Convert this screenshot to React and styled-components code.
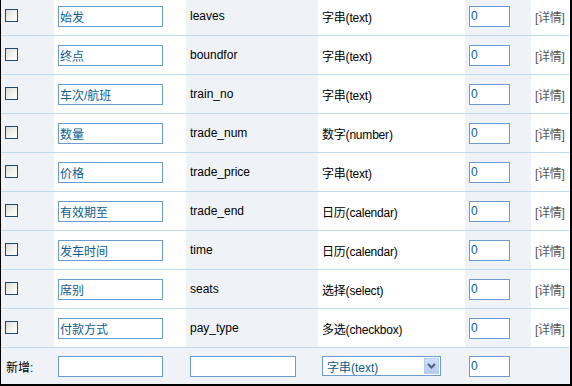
import React from 'react';
import styled, { createGlobalStyle } from 'styled-components';

const GlobalStyle = createGlobalStyle`
  html, body {
    margin: 0;
    padding: 0;
    background: #ffffff;
    overflow: hidden;
  }
  body {
    font-family: "Liberation Sans", "Noto Sans CJK SC", sans-serif;
    font-size: 12px;
    color: #000000;
  }
`;

const fields = [
  { label: '始发', name: 'leaves', type: '字串(text)' },
  { label: '终点', name: 'boundfor', type: '字串(text)' },
  { label: '车次/航班', name: 'train_no', type: '字串(text)' },
  { label: '数量', name: 'trade_num', type: '数字(number)' },
  { label: '价格', name: 'trade_price', type: '字串(text)' },
  { label: '有效期至', name: 'trade_end', type: '日历(calendar)' },
  { label: '发车时间', name: 'time', type: '日历(calendar)' },
  { label: '席别', name: 'seats', type: '选择(select)' },
  { label: '付款方式', name: 'pay_type', type: '多选(checkbox)' },
];

const Frame = styled.div`
  width: 572px;
  height: 389px;
  margin-top: -3px;
  box-sizing: border-box;
  border-left: 1px solid #000000;
  border-right: 2px solid #000000;
  border-bottom: 2px solid #000000;
  display: flex;
  flex-direction: column;
`;

const Row = styled.div`
  display: grid;
  grid-template-columns: 53px 132px 132px 147px 66px 39px;
  height: ${(p) => (p.$last ? '36px' : '38px')};
  border-bottom: ${(p) => (p.$last ? 'none' : '1px solid #bddcee')};
  background: ${(p) => (p.$last ? '#eff3f7' : '#ffffff')};
`;

const Cell = styled.div`
  display: flex;
  align-items: center;
  padding-left: 4px;
  background: ${(p) => (p.$shade ? '#eff3f7' : 'transparent')};
  white-space: nowrap;
  overflow: hidden;
`;

const Check = styled.span`
  width: 13px;
  height: 13px;
  box-sizing: border-box;
  border: 1px solid #1c4b7a;
  background: linear-gradient(135deg, #dcdcd6 0%, #f4f4f0 60%, #ffffff 100%);
  margin-top: -1px;
`;

const Field = styled.input`
  box-sizing: border-box;
  width: ${(p) => p.$w}px;
  height: 21px;
  border: 1px solid #6b9bd0;
  padding: 0 1px;
  margin: 0;
  font-family: "Liberation Sans", "Noto Sans CJK SC", sans-serif;
  font-size: 12px;
  color: #0b5d8e;
  background: #ffffff;
  outline: none;
`;

const Name = styled.span`
  font-family: "Liberation Sans", sans-serif;
  font-size: 12px;
  color: #000000;
`;

const TypeText = styled.span`
  font-family: "Liberation Sans", "Noto Sans CJK SC", sans-serif;
  font-size: 12px;
  letter-spacing: -0.2px;
`;

const Detail = styled.span`
  font-size: 12px;
  color: #555555;
  letter-spacing: -0.3px;
`;

const AddLabel = styled.span`
  font-size: 12px;
  padding-left: 1px;
`;

const Select = styled.div`
  box-sizing: border-box;
  width: 119px;
  height: 20px;
  border: 1px solid #6b9bd0;
  background: #ffffff;
  display: flex;
  align-items: center;
  justify-content: space-between;
  padding: 0 1px 0 4px;
  color: #0b5d8e;
  font-size: 12px;
`;

const DropButton = styled.span`
  width: 15px;
  height: 16px;
  box-sizing: border-box;
  border: 1px solid #b9ccf2;
  background: linear-gradient(180deg, #d3e0fb 0%, #b5c9f4 100%);
  display: flex;
  align-items: center;
  justify-content: center;
`;

const App = () => (
  <>
    <GlobalStyle />
    <Frame>
      {fields.map((f) => (
        <Row key={f.name}>
          <Cell $shade>
            <Check />
          </Cell>
          <Cell>
            <Field $w={105} defaultValue={f.label} />
          </Cell>
          <Cell $shade>
            <Name>{f.name}</Name>
          </Cell>
          <Cell>
            <TypeText>{f.type}</TypeText>
          </Cell>
          <Cell $shade>
            <Field $w={41} defaultValue="0" />
          </Cell>
          <Cell>
            <Detail>[详情]</Detail>
          </Cell>
        </Row>
      ))}
      <Row $last>
        <Cell>
          <AddLabel>新增:</AddLabel>
        </Cell>
        <Cell>
          <Field $w={105} defaultValue="" />
        </Cell>
        <Cell>
          <Field $w={106} defaultValue="" />
        </Cell>
        <Cell>
          <Select>
            <span>字串(text)</span>
            <DropButton>
              <svg width="9" height="6" viewBox="0 0 9 6">
                <path d="M1 1 L4.5 4.5 L8 1" fill="none" stroke="#4d6185" strokeWidth="2" />
              </svg>
            </DropButton>
          </Select>
        </Cell>
        <Cell>
          <Field $w={41} defaultValue="0" />
        </Cell>
        <Cell />
      </Row>
    </Frame>
  </>
);

export default App;
